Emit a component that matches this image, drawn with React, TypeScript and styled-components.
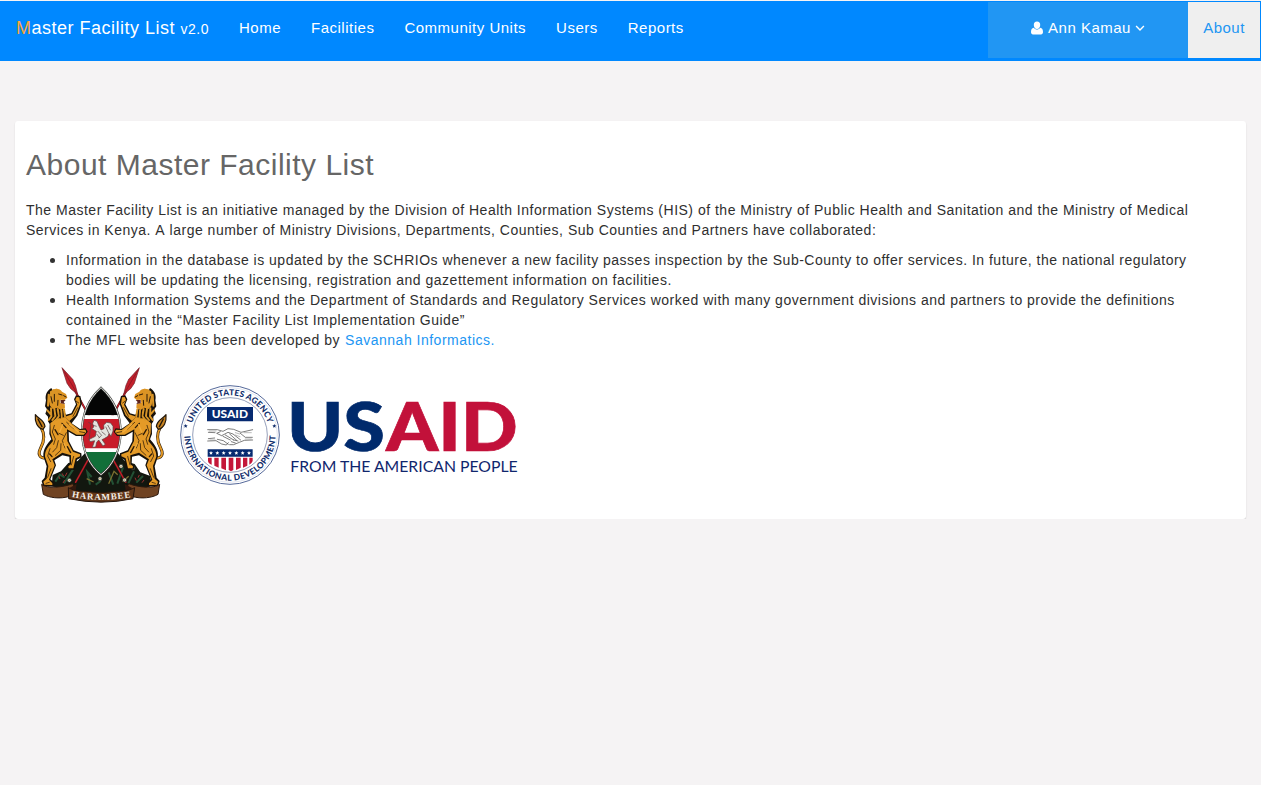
import React from 'react';
import styled, { createGlobalStyle } from 'styled-components';

const GlobalStyle = createGlobalStyle`
  * { box-sizing: border-box; }
  body {
    margin: 0;
    background: #f5f3f4;
    color: #2f2f2f;
    font: 14px/20px "Liberation Sans", Arial, sans-serif;
    letter-spacing: 0.5px;
  }
  a { color: #2196f3; text-decoration: none; }
`;

const Navbar = styled.nav`
  display: flex;
  align-items: flex-start;
  height: 60px;
  margin-top: 1px;
  padding: 1px 1px 0 16px;
  background: #0088ff;
`;

const Brand = styled.a`
  && { color: #fff; }
  font-size: 18px;
  margin-right: 15px;
  padding: 16px 0;
  white-space: nowrap;
`;

const Initial = styled.span`
  color: #f9a63a;
`;

const Version = styled.small`
  font-size: 14px;
`;

const Menu = styled.div<{ $end?: boolean }>`
  display: flex;
  margin-left: ${(p) => (p.$end ? 'auto' : '0')};
`;

const NavItem = styled.a<{ $tone?: 'user' | 'active' }>`
  && { color: ${(p) => (p.$tone === 'active' ? '#2196f3' : '#fff')}; }
  display: flex;
  justify-content: center;
  height: 56px;
  padding: 16px 15px;
  font-size: 15px;
  white-space: nowrap;
  width: ${(p) => (p.$tone === 'user' ? '200px' : p.$tone === 'active' ? '72px' : 'auto')};
  background: ${(p) => (p.$tone === 'user' ? '#2196f3' : p.$tone === 'active' ? '#efefef' : 'transparent')};
`;

const UserIcon = styled.svg`
  width: 12px;
  height: 14px;
  margin: 3px 5px 0 0;
`;

const Chevron = styled.svg`
  width: 10px;
  height: 8px;
  margin: 6px 0 0 4px;
`;

const Card = styled.main`
  margin: 60px 15px 0;
  padding: 27px 11px 9px;
  background: #fff;
  border-radius: 3px;
  box-shadow: 0 1px 1px rgba(0, 0, 0, 0.1), 0 1px 2px rgba(0, 0, 0, 0.08);
`;

const Title = styled.h1`
  margin: 0 0 19px;
  color: #666;
  font-size: 30px;
  font-weight: 400;
  line-height: 33px;
`;

const Intro = styled.p`
  margin: 0 0 10px;
`;

const Points = styled.ul`
  margin: 0 0 10px;
  padding-left: 40px;
  list-style: none;
`;

const Point = styled.li`
  &::before {
    content: '';
    float: left;
    width: 5px;
    height: 5px;
    margin: 8px 0 0 -16px;
    border-radius: 50%;
    background: #333;
  }
`;

const Company = styled.a`
  margin-left: 0.7px;
`;

const Unkerned = styled.span`
  font-kerning: none;
`;

const Logos = styled.div`
  display: flex;
  height: 150px;
  margin-left: -1px;
`;

const CrestArt = styled.svg`
  width: 150px;
  height: 150px;
`;

const AidArt = styled.svg`
  width: 350px;
  height: 110px;
  margin-top: 20px;
`;

const Spear = () => (
  <g>
    <path d="M150 92 L303 368" stroke="#5e1515" strokeWidth="6" />
    <path d="M150 92 L303 368" stroke="#c81f2c" strokeWidth="3.5" />
    <path d="M111 23 L143 58 L151 76 L158 103 L137 86 L126 70Z" fill="#c3202c" stroke="#6e2028" strokeWidth="2" />
    <path d="M114 28 L155 99" stroke="#7c1520" strokeWidth="2" />
  </g>
);

const Lion = () => (
  <g strokeLinejoin="round" strokeLinecap="round">
    <path d="M76 286 C50 304 35 288 47 264 C59 243 60 223 48 202" fill="none" stroke="#2a1906" strokeWidth="9" />
    <path d="M76 286 C50 304 35 288 47 264 C59 243 60 223 48 202" fill="none" stroke="#e69a24" strokeWidth="5.5" />
    <path d="M54 208 C36 204 29 184 31 164 C39 176 57 179 60 199Z" fill="#c88320" stroke="#21160a" strokeWidth="3.5" />
    <path d="M39 177 L51 200" stroke="#21160a" strokeWidth="4" />
    <path d="M79 84 C63 94 60 108 63 121 L60 139 L66 148 L61 161 L69 170 L69 184 L74 192 L73 222 L79 238 C67 252 54 266 55 289 L65 319 L59 353 L50 363 L54 378 L88 380 L87 367 L76 358 L93 316 L88 301 L112 286 L133 290 L134 311 L125 318 L128 329 L149 329 L156 299 L170 292 L169 280 L146 271 L132 244 L131 215 L153 228 L178 228 L188 215 L182 205 L165 207 L140 190 L157 167 L171 130 L166 108 L153 106 L147 118 L153 133 L139 160 L123 164Z" fill="#17110a" />
    <path d="M76 190 L91 177 L121 171 L141 192 L164 210 L181 209 L184 216 L176 224 L155 224 L126 208 L127 243 L144 275 L165 283 L165 289 L152 295 L145 325 L131 325 L130 319 L138 313 L138 286 L112 278 L82 298 L89 316 L72 359 L82 370 L82 375 L58 374 L55 365 L65 356 L70 318 L60 290 C59 270 72 257 84 243 L77 220Z" fill="#e49a27" />
    <path d="M133 183 L120 170 L142 163 L157 134 L151 119 L155 111 L163 112 L166 131 L152 166Z" fill="#e49a27" />
    <path d="M77 94 C86 83 105 84 111 95 L123 102 L127 113 L119 120 L107 119 L105 128 L119 132 L120 143 L107 150 L97 143 L83 147 L74 136 L71 116Z" fill="#dd9322" />
    <path d="M71 104 L69 137 M78 96 L76 124 L85 141 M85 91 L83 119 L93 132 M95 89 L91 112 L99 138 M67 151 L78 164 M78 145 L79 169 L71 180 M88 146 L91 168 L82 180 M98 147 L102 168 L94 179 M109 151 L110 175 M117 148 L120 169" fill="none" stroke="#d99527" strokeWidth="6" />
    <path d="M78 110 L82 129 M88 103 L88 124 M99 121 L98 136 M83 153 L86 169 M105 159 L106 174 M101 102 L111 105 M116 107 L123 111" fill="none" stroke="#2a1907" strokeWidth="3" />
    <path d="M107 120 L122 120 L116 126 L120 132 L107 130Z" fill="#5b221a" />
    <path d="M88 196 L82 216 L91 237 L86 253 M102 220 L115 226 M124 218 L112 242 L120 264 M100 242 L95 263 L83 276 M108 251 L107 271 L91 286 M75 266 L68 288 L77 305 M78 326 L68 352 M146 289 L139 315 M125 187 L147 207 M153 123 L161 129 M158 143 L144 169 M164 215 L179 218 M63 370 L73 367" fill="none" stroke="#59390f" strokeWidth="3" />
    <path d="M111 190 L123 203 M90 209 L99 224 M74 282 L81 290 M127 260 L137 278" fill="none" stroke="#2b1a08" strokeWidth="4" />
    <path d="M113 194 L104 216 M117 250 L127 271 M134 193 L160 216" fill="none" stroke="#f2ad3c" strokeWidth="4" />
  </g>
);

const Flower = ({ x, y }: { x: number; y: number }) => (
  <g transform={`translate(${x} ${y})`}>
    <circle r="6" fill="#d8dacd" stroke="#252d25" strokeWidth="2" />
    <circle r="2" fill="#bd9148" />
  </g>
);

const outline = 'M228 83 C186 121 170 170 171 219 C172 271 193 317 228 344 C263 317 286 271 287 219 C288 170 270 121 228 83Z';

const Crest = () => (
  <CrestArt viewBox="0 0 450 450" role="img" aria-label="Coat of arms of Kenya">
    <defs>
      <path id="motto" d="M140 411 Q228 428 320 411" />
      <clipPath id="shield"><path d={outline} /></clipPath>
    </defs>
    <path d="M80 377 L83 345 L108 334 L130 309 L158 303 L183 276 L275 275 L299 303 L329 312 L346 337 L376 348 L379 377 L326 400 L227 409 L132 400Z" fill="#12170f" />
    <path d="M91 365 L105 344 L119 352 M117 370 L144 329 M195 374 L187 336 L200 351 M265 374 L251 337 M277 371 L294 322 M310 370 L327 334 M334 368 L354 348 M212 374 L227 363" fill="none" stroke="#235135" strokeWidth="6" />
    <path d="M251 371 L267 334 L278 344 M293 365 L311 349 M185 356 L206 366" fill="none" stroke="#7b7030" strokeWidth="4" />
    <path d="M101 349l4 8 M111 340l5 8 M126 338l-5 10 M119 360l-5 9 M343 345l-4 8 M357 360l-6 8 M330 353l4 9" stroke="#9b3030" strokeWidth="3" />
    <Spear />
    <g transform="translate(454 0) scale(-1 1)"><Spear /></g>
    <Flower x={134} y={322} /><Flower x={133} y={361} /><Flower x={225} y={356} /><Flower x={288} y={319} /><Flower x={323} y={324} /><Flower x={299} y={360} />
    <g clipPath="url(#shield)">
      <path fill="#050505" d="M165 80h126v86H165z" />
      <path fill="#fff" d="M165 166h126v110H165z" />
      <path fill="#c81b29" d="M165 177h126v88H165z" />
      <path fill="#116f39" d="M165 276h126v72H165z" />
    </g>
    <path d={outline} fill="none" stroke="#393b38" strokeWidth="6" />
    <path d={outline} fill="none" stroke="#e9e9e5" strokeWidth="3" />
    <g fill="#e5e4df" stroke="#554143" strokeWidth="2" strokeLinejoin="round">
      <path d="M203 190 L207 181 L216 184 L222 198 L228 210 L237 206 L236 195 L245 187 L257 189 L264 199 L264 213 L258 229 L252 220 L249 229 L239 235 L231 239 L241 253 L234 258 L221 240 L215 247 L212 261 L202 262 L209 242 L195 245 L193 238 L211 229 L214 214 L201 206 L206 201Z" />
      <path d="M190 187 L198 191 L192 240 M218 213 L230 226 L221 234 M242 200 L251 219 M248 195 L257 211 M204 196 L215 199 M230 215 L242 225 M215 222 L224 234" fill="none" />
    </g>
    <Lion />
    <g transform="translate(454 0) scale(-1 1)"><Lion /></g>
    <path d="M50 373 C66 386 112 383 143 371 L151 388 L134 409 C105 418 71 413 55 403Z M404 373 C388 386 342 383 311 371 L303 388 L320 409 C349 418 383 413 399 403Z" fill="#704322" stroke="#2b170c" strokeWidth="3" />
    <path d="M134 383 L155 372 L151 397 L134 409Z M320 383 L299 372 L303 397 L320 409Z" fill="#31180d" />
    <path d="M130 383 Q148 394 181 394 Q226 402 276 394 Q310 394 329 383 L324 416 Q229 437 131 416Z" fill="#623719" stroke="#25150d" strokeWidth="3" />
    <text fill="#f4eee7" fontFamily="Liberation Serif, serif" fontSize="27" fontWeight="700" letterSpacing="0"><textPath href="#motto" textLength="178">HARAMBEE</textPath></text>
  </CrestArt>
);

const star = 'M0 -6 L1.8 -2 L6 -1.8 L2.6 1.2 L3.8 5.4 L0 3 L-3.8 5.4 L-2.6 1.2 L-6 -1.8 L-1.8 -2Z';

const UsAid = () => (
  <AidArt viewBox="0 0 1050 330" role="img" aria-label="USAID from the American people">
    <defs>
      <path id="upper" d="M46 165 A119 119 0 0 1 284 165" />
      <path id="lower" d="M28 165 A137 137 0 0 0 302 165" />
    </defs>
    <circle cx="165" cy="165" r="148" fill="#fff" stroke="#55699a" strokeWidth="3" />
    <circle cx="165" cy="165" r="142" fill="none" stroke="#c6cde0" strokeWidth="1.5" />
    <circle cx="165" cy="165" r="112" fill="none" stroke="#607097" strokeWidth="2" />
    <g fill="#112d6b" fontFamily="Lato, sans-serif" fontWeight="900" fontSize="25" letterSpacing="0">
      <text><textPath href="#upper" startOffset="36" textLength="302">UNITED STATES AGENCY</textPath></text>
      <text><textPath href="#lower" startOffset="3" textLength="425">INTERNATIONAL DEVELOPMENT</textPath></text>
    </g>
    <path d={star} transform="translate(32 138)" fill="#112d6b" />
    <path d={star} transform="translate(298 138)" fill="#112d6b" />
    <path d="M96 81h138v43H96z" fill="#062a70" />
    <text x="110" y="113" textLength="109" lengthAdjust="spacingAndGlyphs" fill="#fff" fontFamily="Lato, sans-serif" fontWeight="900" fontSize="31" letterSpacing="0">USAID</text>
    <g fill="none" stroke="#3c3c3c" strokeWidth="2" strokeLinecap="round" strokeLinejoin="round">
      <path d="M98 149 L127 149 L144 154 L159 146 L176 148 L198 157 L233 149 M98 183 L123 182 L140 192 L154 195 L160 188 M233 180 L208 181 L193 187 L176 194 L164 194 M136 155 L125 160 L140 167 L159 157 L174 162 L197 180 M144 169 L166 180 M151 165 L176 180 M164 162 L185 181 M127 178 L145 182 L160 193 M196 160 L211 172 L232 172 M100 157 L120 158 M100 176 L119 174 M169 185 L181 189 M176 180 L189 183" />
      <path d="M103 153h20M105 180h15M207 158h22M211 177h18M181 165l14 5M181 158l13 4" stroke="#999" />
    </g>
    <path d="M98 208h135v22H98z" fill="#062a70" />
    {[108, 127, 146, 165, 184, 203, 222].map((x) => <path key={x} d={star} transform={`translate(${x} 219)`} fill="#fff" />)}
    <path d="M99 233h11v21q-11-4-11-12z M118 233h13v30l-13-6z M139 233h14v38l-14-6z M161 233h14v37l-7 4-7-4z M183 233h14v30l-14 7z M204 233h13v24l-13 6z M223 233h10v10q-2 6-10 11z" fill="#c41739" />
    <g transform="translate(315 30)" fontFamily="Lato, sans-serif" letterSpacing="0">
      <g fontSize="197" fontWeight="900" strokeWidth="2">
        <text x="21" y="182" textLength="294" lengthAdjust="spacingAndGlyphs" fill="#002a6c" stroke="#002a6c">US</text>
        <text x="318" y="182" textLength="395" lengthAdjust="spacingAndGlyphs" fill="#c2113a" stroke="#c2113a">AID</text>
      </g>
      <text x="31" y="246" fontSize="46" fontWeight="400" textLength="682" lengthAdjust="spacingAndGlyphs" fill="#10266d">FROM THE AMERICAN PEOPLE</text>
    </g>
  </AidArt>
);

const links = ['Home', 'Facilities', 'Community Units', 'Users', 'Reports'];

export default function App() {
  return (
    <>
      <GlobalStyle />
      <Navbar>
        <Brand href="#"><Initial>M</Initial>aster Facility List <Version>v2.0</Version></Brand>
        <Menu>{links.map((label) => <NavItem href="#" key={label}>{label}</NavItem>)}</Menu>
        <Menu $end>
          <NavItem href="#" $tone="user">
            <UserIcon viewBox="0 0 12 14"><path fill="#fff" d="M6 0.5a3.3 3.3 0 0 1 3.2 3.4c0 2-1.2 4-3.2 4s-3.2-2-3.2-4A3.3 3.3 0 0 1 6 .5zM2.8 6.8C3.6 8 4.7 8.6 6 8.6S8.4 8 9.2 6.8c2 .2 2.8 2 2.8 4.3 0 1.5-.8 2.4-2 2.4H2c-1.2 0-2-.9-2-2.4 0-2.3.8-4.1 2.8-4.3z" /></UserIcon>
            Ann Kamau
            <Chevron viewBox="0 0 10 8"><path d="M1.1 2 L5 5.9 L8.9 2" fill="none" stroke="#fff" strokeWidth="1.4" /></Chevron>
          </NavItem>
          <NavItem href="#" $tone="active">About</NavItem>
        </Menu>
      </Navbar>
      <Card>
        <Title>About Master Facility List</Title>
        <Intro>The Master Facility List is an initiative managed by the Division of Health Information Systems (HIS) of the Ministry of Public Health and Sanitation and the Ministry of Medical Services in Kenya.<Unkerned> A </Unkerned>large number of Ministry Divisions, Departments, Counties, Sub Counties and Partners have collaborated:</Intro>
        <Points>
          <Point>Information in the database is updated by the SCHRIOs whenever a new facility passes inspection by the Sub-County to offer services. In future, the national regulatory bodies will be updating the licensing, registration and gazettement information on facilities.</Point>
          <Point>Health Information Systems and the Department of Standards and Regulatory Services worked with many government divisions and partners to provide the definitions contained in the “Master Facility List Implementation Guide”</Point>
          <Point>The MFL website has been developed by <Company href="#">Savannah Informatics.</Company></Point>
        </Points>
        <Logos><Crest /><UsAid /></Logos>
      </Card>
    </>
  );
}
